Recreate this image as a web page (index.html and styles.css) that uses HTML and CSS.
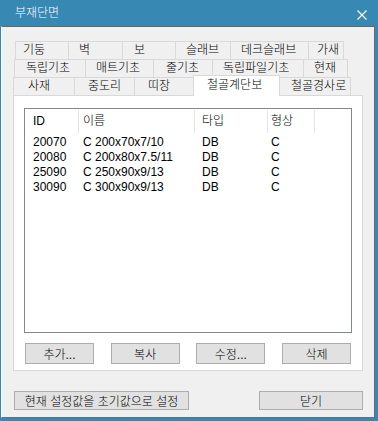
FILE: index.html
```html
<!DOCTYPE html>
<html lang="ko">
<head>
  <meta charset="UTF-8">
  <title>부재단면</title>
  <link rel="stylesheet" href="styles.css">
</head>
<body>
  <div class="window">
    <!-- Title bar -->
    <div class="titlebar">
      <span class="title">부재단면</span>
      <svg class="closeIcon" width="10" height="10" viewBox="0 0 10 10">
        <path d="M0.5 0.5 L9.5 9.5 M9.5 0.5 L0.5 9.5" stroke="#fff" stroke-width="1.1" fill="none"/>
      </svg>
    </div>

    <div class="client">
      <!-- Tabs -->
      <div class="tabs">
        <div class="tabRow row1">
          <div class="tab">기둥</div>
          <div class="tab">벽</div>
          <div class="tab">보</div>
          <div class="tab">슬래브</div>
          <div class="tab">데크슬래브</div>
          <div class="tab last">가새</div>
        </div>
        <div class="tabRow row2">
          <div class="tab">독립기초</div>
          <div class="tab">매트기초</div>
          <div class="tab">줄기초</div>
          <div class="tab">독립파일기초</div>
          <div class="tab last">현재</div>
        </div>
        <div class="tabRow row3">
          <div class="tab">사재</div>
          <div class="tab">중도리</div>
          <div class="tab">띠장</div>
          <div class="tab selected">철골계단보</div>
          <div class="tab last">철골경사로</div>
        </div>

        <div class="panel">
          <div class="listView">
            <div class="listRow listHead">
              <div class="cell c1">ID</div>
              <div class="cell c2">이름</div>
              <div class="cell c3">타입</div>
              <div class="cell c4">형상</div>
            </div>
            <div class="listBody">
              <div class="listRow">
                <div class="cell c1">20070</div>
                <div class="cell c2">C 200x70x7/10</div>
                <div class="cell c3">DB</div>
                <div class="cell c4">C</div>
              </div>
              <div class="listRow">
                <div class="cell c1">20080</div>
                <div class="cell c2">C 200x80x7.5/11</div>
                <div class="cell c3">DB</div>
                <div class="cell c4">C</div>
              </div>
              <div class="listRow">
                <div class="cell c1">25090</div>
                <div class="cell c2">C 250x90x9/13</div>
                <div class="cell c3">DB</div>
                <div class="cell c4">C</div>
              </div>
              <div class="listRow">
                <div class="cell c1">30090</div>
                <div class="cell c2">C 300x90x9/13</div>
                <div class="cell c3">DB</div>
                <div class="cell c4">C</div>
              </div>
            </div>
          </div>

          <div class="panelButtons">
            <button class="btn small">추가...</button>
            <button class="btn small">복사</button>
            <button class="btn small">수정...</button>
            <button class="btn small">삭제</button>
          </div>
        </div>
      </div>

      <!-- Bottom buttons -->
      <div class="footer">
        <button class="btn resetBtn">현재 설정값을 초기값으로 설정</button>
        <button class="btn closeBtn">닫기</button>
      </div>
    </div>
  </div>
</body>
</html>
```

FILE: styles.css
```css
body {
  margin: 0;
  background-color: #3789b3;
  font-family: "Liberation Sans", "Noto Sans CJK KR", sans-serif;
  font-size: 12px;
  font-weight: 300;
  color: #000;
}

.window {
  width: 378px;
  height: 421px;
  display: flex;
  flex-direction: column;
}

/* Title bar */
.titlebar {
  height: 26px;
  flex: none;
  display: flex;
  align-items: center;
  justify-content: space-between;
  color: #fff;
  padding: 0 11px 0 15px;
}

.title {
  font-size: 12px;
  line-height: 14px;
  margin-top: -1px;
}

.closeIcon {
  margin-top: 3px;
}

/* Client area */
.client {
  flex: 1;
  margin: 0 3px 3px 1px;
  background-color: #f0f0f0;
  border-top: 1px solid #5f6b73;
  border-right: 1px solid #6d6d6d;
  border-bottom: 1px solid #6d6d6d;
  border-left: 1px solid #f8f8f8;
  display: flex;
  flex-direction: column;
}

/* Tabs */
.tabs {
  margin: 14px 11px 0 11px;
}

.tabRow {
  display: flex;
  height: 18px;
}

.row1 { margin-left: 2px; }
.row2 { margin-left: 1px; }

.tab {
  box-sizing: border-box;
  height: 18px;
  border-top: 1px solid #d9d9d9;
  border-left: 1px solid #d9d9d9;
  background-color: #f0f0f0;
  padding-left: 10px;
  line-height: 17px;
  white-space: nowrap;
}

.tab.last {
  border-right: 1px solid #d9d9d9;
}

.row1 .tab:nth-child(1) { width: 53px; padding-left: 7px; }
.row1 .tab:nth-child(2) { width: 54px; }
.row1 .tab:nth-child(3) { width: 53px; padding-left: 11px; }
.row1 .tab:nth-child(4) { width: 55px; }
.row1 .tab:nth-child(5) { width: 78px; }
.row1 .tab:nth-child(6) { width: 36px; padding-left: 8px; }

.row2 .tab:nth-child(1) { width: 71px; padding-left: 11px; }
.row2 .tab:nth-child(2) { width: 68px; }
.row2 .tab:nth-child(3) { width: 59px; padding-left: 12px; }
.row2 .tab:nth-child(4) { width: 91px; }
.row2 .tab:nth-child(5) { width: 45px; }

.row3 .tab:nth-child(1) { width: 61px; padding-left: 14px; }
.row3 .tab:nth-child(2) { width: 60px; padding-left: 13px; }
.row3 .tab:nth-child(3) { width: 59px; padding-left: 13px; }
.row3 .tab:nth-child(4) { width: 87px; padding-left: 13px; }
.row3 .tab:nth-child(5) { width: 72px; padding-left: 11px; }

.tab.selected {
  position: relative;
  z-index: 1;
  height: 21px;
  margin-top: -2px;
  margin-right: -1px;
  border-right: 1px solid #d9d9d9;
  background-color: #fff;
  line-height: 18px;
}

.panel {
  box-sizing: border-box;
  width: 350px;
  height: 276px;
  background-color: #fff;
  border: 1px solid #d9d9d9;
  padding: 12px 10px 0 10px;
}

/* List view */
.listView {
  box-sizing: border-box;
  height: 225px;
  border: 1px solid #828790;
  background-color: #fff;
}

.listRow {
  display: grid;
  grid-template-columns: 54px 116px 73px 47px;
  height: 15px;
  line-height: 15px;
}

.listHead {
  height: 25px;
  line-height: 25px;
}

.listHead .cell {
  border-right: 1px solid #e5e5e5;
  height: 23px;
  margin-top: 1px;
  line-height: 23px;
}

.listBody {
  padding-top: 1px;
}

.cell {
  box-sizing: border-box;
  white-space: nowrap;
}

.c1 { padding-left: 8px; }
.c2 { padding-left: 4px; }
.c3 { padding-left: 7px; }
.c4 { padding-left: 3px; }

/* Buttons */
.btn {
  box-sizing: border-box;
  font-family: "Liberation Sans", "Noto Sans CJK KR", sans-serif;
  font-size: 12px;
  font-weight: 300;
  color: #000;
  background-color: #e1e1e1;
  border: 1px solid #adadad;
  padding: 0;
  margin: 0;
}

.panelButtons {
  display: flex;
  justify-content: space-between;
  margin-top: 10px;
  padding: 0 1px;
}

.btn.small {
  width: 69px;
  height: 21px;
}

.footer {
  display: flex;
  justify-content: space-between;
  margin: 20px 11px 0 12px;
}

.resetBtn {
  width: 175px;
  height: 19px;
}

.closeBtn {
  width: 104px;
  height: 19px;
}
```
